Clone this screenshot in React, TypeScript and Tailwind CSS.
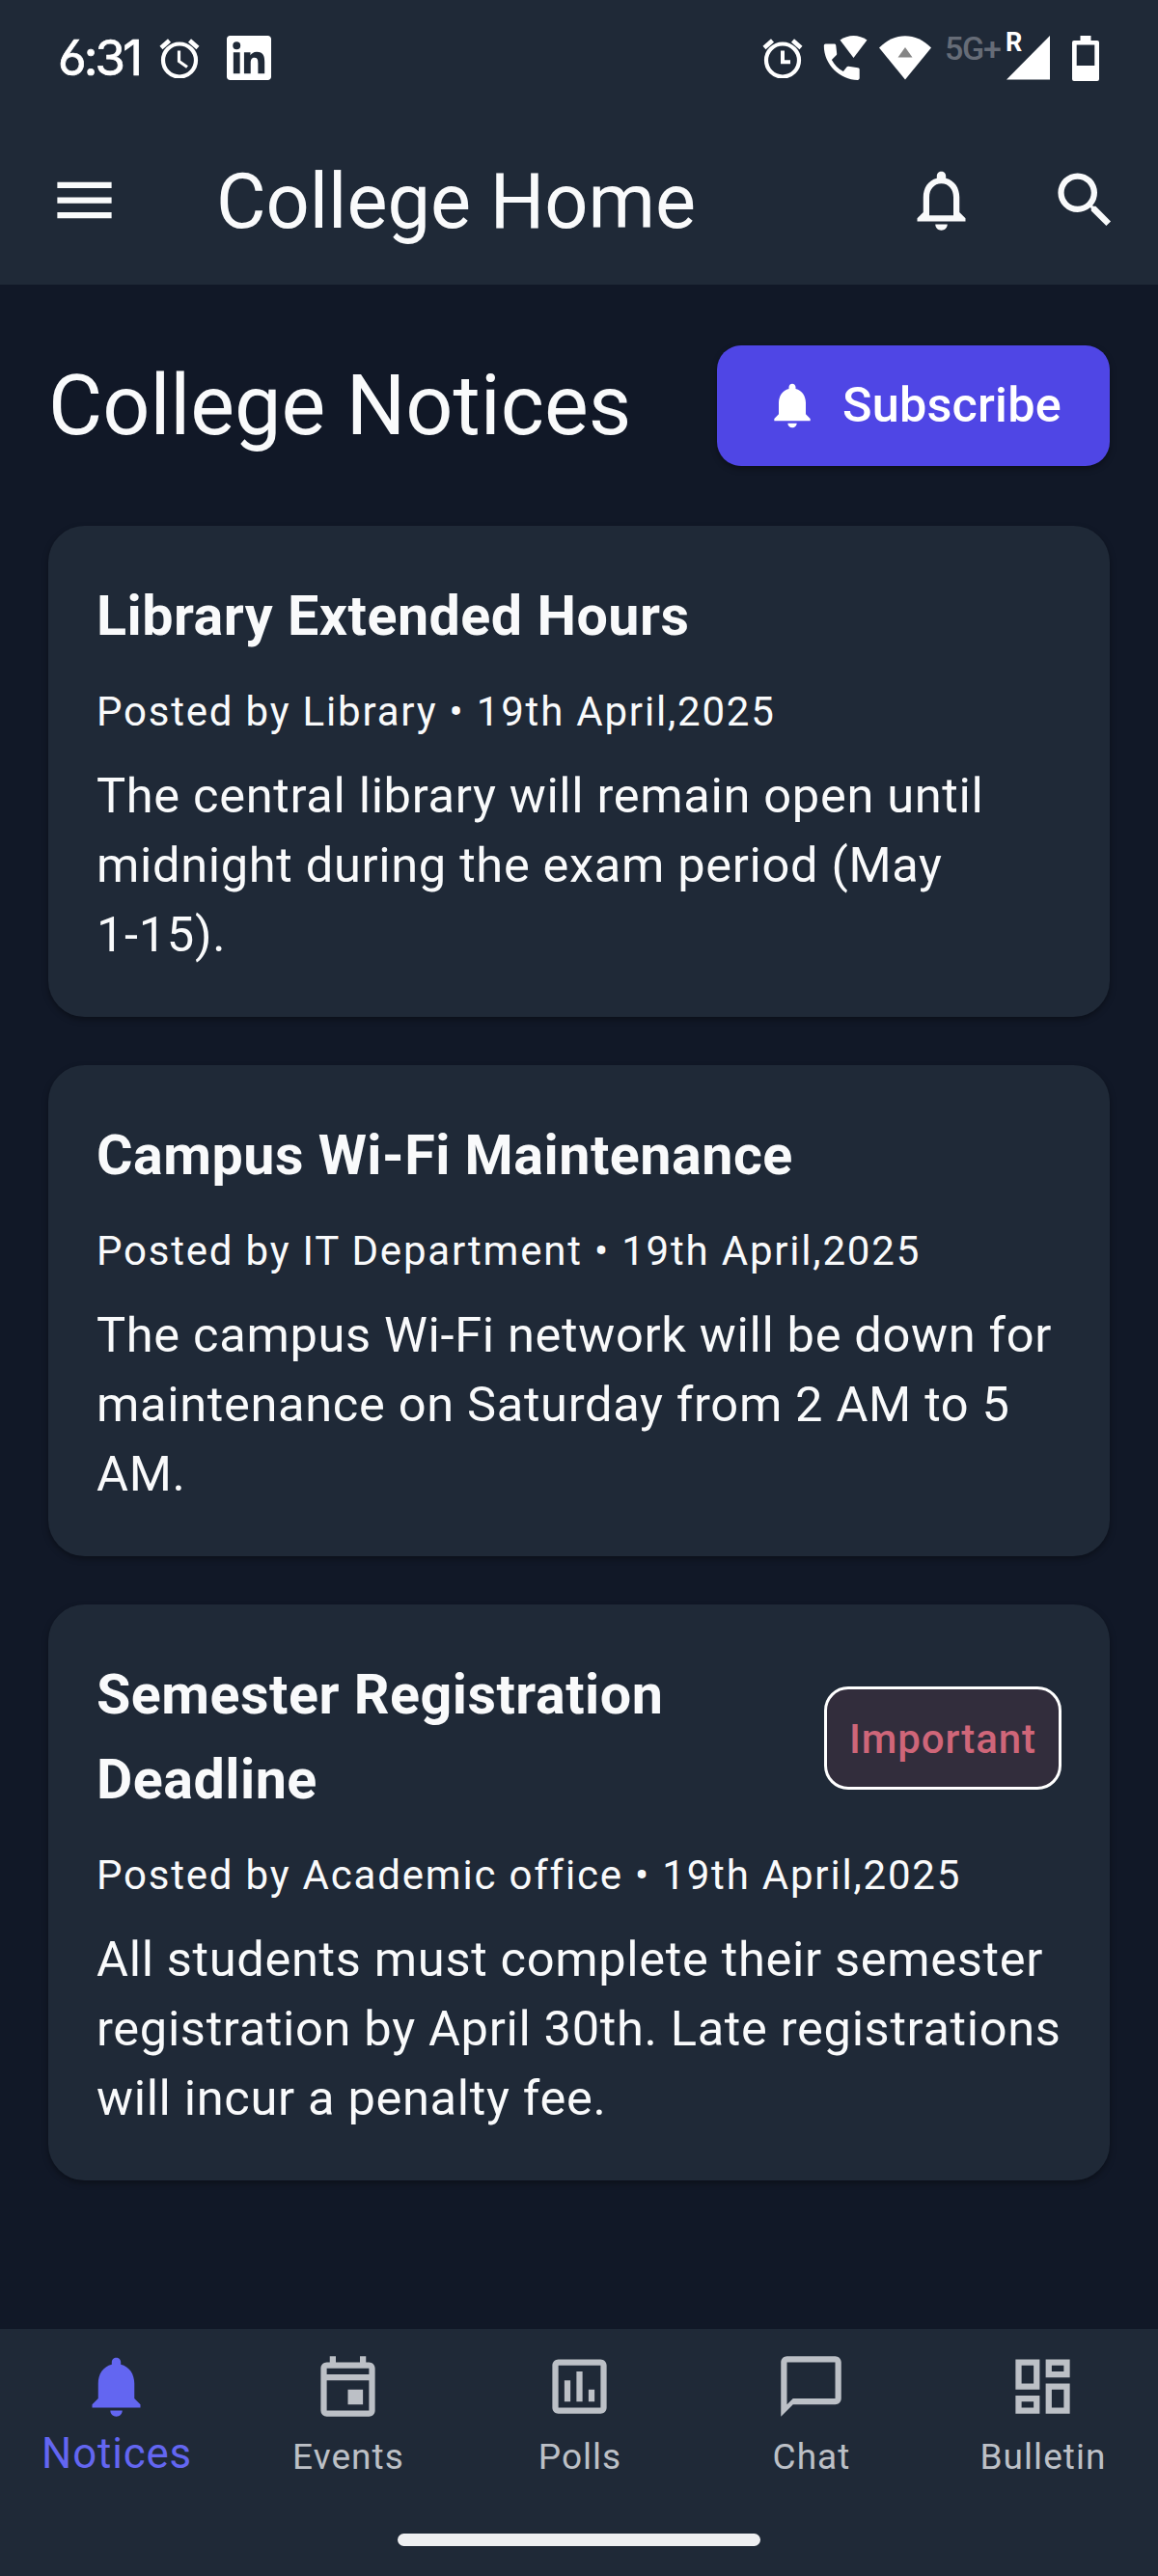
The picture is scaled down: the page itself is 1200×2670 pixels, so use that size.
import type { ReactNode } from 'react'
import {
  MdChatBubbleOutline,
  MdMenu,
  MdNotifications,
  MdOutlineDashboard,
  MdOutlineEvent,
  MdOutlineNotifications,
  MdOutlinePoll,
  MdSearch,
} from 'react-icons/md'

function AlarmIcon({ thinHands = false }: { thinHands?: boolean }) {
  return (
    <svg viewBox="0 0 42 42" className="size-[42px] shrink-0" fill="none" stroke="currentColor">
      <circle cx="21" cy="23.500" r="17" strokeWidth="4.2" />
      <path d="M2 10.500 10.500 3M31.500 3 40 10.500" strokeWidth="4.600" />
      {thinHands ? (
        <path d="M20.500 13.500v11l8.500 6" strokeWidth="3.200" />
      ) : (
        <path d="M21 13.500v11.800h8" strokeWidth="4" />
      )}
    </svg>
  )
}

function LinkedInIcon() {
  return (
    <svg viewBox="0 0 24 24" className="size-[46px] shrink-0" fill="currentColor">
      <path d="M20.447 20.452h-3.554v-5.569c0-1.328-.027-3.037-1.852-3.037-1.853 0-2.136 1.445-2.136 2.939v5.667H9.351V9h3.414v1.561h.046c.477-.9 1.637-1.85 3.37-1.85 3.601 0 4.267 2.37 4.267 5.455v6.286zM5.337 7.433a2.062 2.062 0 0 1-2.063-2.065 2.064 2.064 0 1 1 2.063 2.065zm1.782 13.019H3.555V9h3.564v11.452zM22.225 0H1.771C.792 0 0 .774 0 1.729v20.542C0 23.227.792 24 1.771 24h20.451C23.2 24 24 23.227 24 22.271V1.729C24 .774 23.2 0 22.222 0h.003z" />
    </svg>
  )
}

function WifiCallIcon() {
  return (
    <svg viewBox="0 0 46 47" className="h-[47px] w-[46px] shrink-0" fill="currentColor">
      <path d="M17.500 4.500C26 -1.500 37 -1.500 45.500 4.500L31.500 23z" />
      <path d="M2.500 8.500h9c1 0 1.700.7 1.800 1.700l.9 8.300c.1.700-.1 1.300-.6 1.800l-4.700 4.700c3 5.500 6.500 9 12 12l3.500-4.500c.5-.6 1.200-.8 1.900-.7l9.700 1.500c1 .1 1.700.8 1.700 1.800v9c0 1-.9 1.900-1.900 1.900C17.500 45.500.800 30 .800 10.500c0-1.100.7-2 1.700-2z" />
    </svg>
  )
}

function WifiIcon() {
  return (
    <svg viewBox="0 0 54 46" className="h-[46px] w-[54px] shrink-0">
      <path d="M0 12.500C16 -4 38 -4 54 12.500L27 45.500z" fill="#fff" />
      <path d="M27 12 34.500 22.500h-15z" fill="#858585" />
    </svg>
  )
}

function BatteryIcon() {
  return (
    <svg viewBox="0 0 28 47" className="h-[47px] w-7 shrink-0" fill="currentColor">
      <path
        fillRule="evenodd"
        d="M8.500 0h11v5H26a2 2 0 0 1 2 2v38a2 2 0 0 1-2 2H2a2 2 0 0 1-2-2V7a2 2 0 0 1 2-2h6.500zM4.700 9.500v21.500h18.600V9.500z"
      />
    </svg>
  )
}

function StatusBar() {
  return (
    <div className="flex h-30 items-center justify-between pr-[61px] pl-[60px] text-white">
      <div className="flex items-center">
        <span className="w-[105px] font-[Inter] text-[51px] leading-[50px] tracking-[-2.9px] [-webkit-text-stroke:0.7px_white] [font-feature-settings:'cv03']">
          6:31
        </span>
        <AlarmIcon thinHands />
        <div className="ml-[28px]">
          <LinkedInIcon />
        </div>
      </div>
      <div className="flex items-center">
        <AlarmIcon />
        <div className="ml-[21px]">
          <WifiCallIcon />
        </div>
        <div className="ml-[12px]">
          <WifiIcon />
        </div>
        <span className="mb-[21px] ml-[14px] w-[64px] text-[34px] leading-[34px] font-medium tracking-[-1.2px] text-[#666c77]">
          5G+
        </span>
        <div className="relative h-[46px] w-[45px]">
          <svg viewBox="0 0 45 46" className="h-[46px] w-[45px]" fill="currentColor">
            <path d="M45 0v45.500H0z" />
          </svg>
          <span className="absolute top-[-8px] left-[-1px] text-[27px] leading-[30px] font-bold">R</span>
        </div>
        <div className="ml-[23px]">
          <BatteryIcon />
        </div>
      </div>
    </div>
  )
}

function AppBar() {
  return (
    <div className="flex h-[175px] items-center px-[50px]">
      <MdMenu className="size-[75px]" />
      <h1 className="ml-[99px] pt-[3px] text-[79.3px] leading-[100px] whitespace-nowrap">College Home</h1>
      <MdOutlineNotifications className="ml-auto size-[75px]" />
      <MdSearch className="mr-[-12px] ml-[74px] size-[75px]" />
    </div>
  )
}

type Notice = { title: string; meta: string; body: ReactNode; important?: boolean }

const notices: Notice[] = [
  {
    title: 'Library Extended Hours',
    meta: 'Posted by Library • 19th April,2025',
    body: (
      <>
        The central library will remain open until midnight during the exam period (May{' '}
        <span className="whitespace-nowrap">1-15).</span>
      </>
    ),
  },
  {
    title: 'Campus Wi-Fi Maintenance',
    meta: 'Posted by IT Department • 19th April,2025',
    body: 'The campus Wi-Fi network will be down for maintenance on Saturday from 2 AM to 5 AM.',
  },
  {
    title: 'Semester Registration Deadline',
    meta: 'Posted by Academic office • 19th April,2025',
    body: 'All students must complete their semester registration by April 30th. Late registrations will incur a penalty fee.',
    important: true,
  },
]

function NoticeCard({ title, meta, body, important }: Notice) {
  return (
    <article className="rounded-[37.5px] bg-[#1f2937] p-[50px] shadow-[0_3px_6px_rgba(0,0,0,0.35)]">
      <div className="flex items-center justify-between">
        <h3 className="flex-1 text-[57.4px] leading-[88px] font-bold tracking-[0.5px]">{title}</h3>
        {important && (
          <span className="flex h-[107px] w-[246px] items-center justify-center rounded-[25px] border-[3px] border-white bg-[#322d3c] pt-[3px] text-[42px] font-medium tracking-[0.9px] text-[#cf6679]">
            Important
          </span>
        )}
      </div>
      <p className="mt-[27px] text-[42px] leading-[55px] tracking-[1.8px] whitespace-nowrap">{meta}</p>
      <p className="mt-6 mr-[-6px] -mb-px text-[50.6px] leading-[72px] tracking-[0.66px]">{body}</p>
    </article>
  )
}

function NavItem({ icon, label, active }: { icon: ReactNode; label: string; active?: boolean }) {
  return (
    <div
      className={
        active
          ? 'flex flex-1 flex-col items-center text-[#6366f1]'
          : 'flex flex-1 flex-col items-center text-[#bcc0c6]'
      }
    >
      {icon}
      <span
        className={
          active
            ? 'mt-[6px] pl-[2px] text-[43.75px] leading-[52px] tracking-[0.87px]'
            : 'mt-[14px] pl-[2px] text-[37px] leading-[44px] tracking-[1.05px]'
        }
      >
        {label}
      </span>
    </div>
  )
}

export default function App() {
  return (
    <div className="flex h-[2670px] w-[1200px] flex-col overflow-hidden bg-[#111827] font-[Roboto,sans-serif] text-[#f9fafb]">
      <header className="bg-[#1f2937]">
        <StatusBar />
        <AppBar />
      </header>
      <main className="flex-1 px-[50px] pt-[62px]">
        <div className="flex h-[126px] items-center justify-between">
          <h2 className="pt-[2px] text-[86.3px] leading-[110px] whitespace-nowrap">College Notices</h2>
          <button className="flex h-[125px] w-[407px] items-center rounded-[25px] bg-[#4f46e5] pl-[50px] text-[50.4px] font-medium tracking-[0.2px] text-white shadow-[0_3px_6px_rgba(0,0,0,0.35)]">
            <MdNotifications className="mr-6 size-[56px]" />
            Subscribe
          </button>
        </div>
        <div className="mt-[62px] flex flex-col gap-[50px]">
          {notices.map((n) => (
            <NoticeCard key={n.title} {...n} />
          ))}
        </div>
      </main>
      <nav className="flex h-[256px] flex-col bg-[#1f2937] pt-[22px]">
        <div className="flex">
          <NavItem icon={<MdNotifications className="size-[75px]" />} label="Notices" active />
          <NavItem icon={<MdOutlineEvent className="size-[75px]" />} label="Events" />
          <NavItem icon={<MdOutlinePoll className="size-[75px]" />} label="Polls" />
          <NavItem icon={<MdChatBubbleOutline className="size-[75px]" />} label="Chat" />
          <NavItem icon={<MdOutlineDashboard className="size-[75px]" />} label="Bulletin" />
        </div>
        <div className="mx-auto mt-auto mb-[31px] h-[13px] w-[376px] rounded-full bg-[#eeeff1]" />
      </nav>
    </div>
  )
}
